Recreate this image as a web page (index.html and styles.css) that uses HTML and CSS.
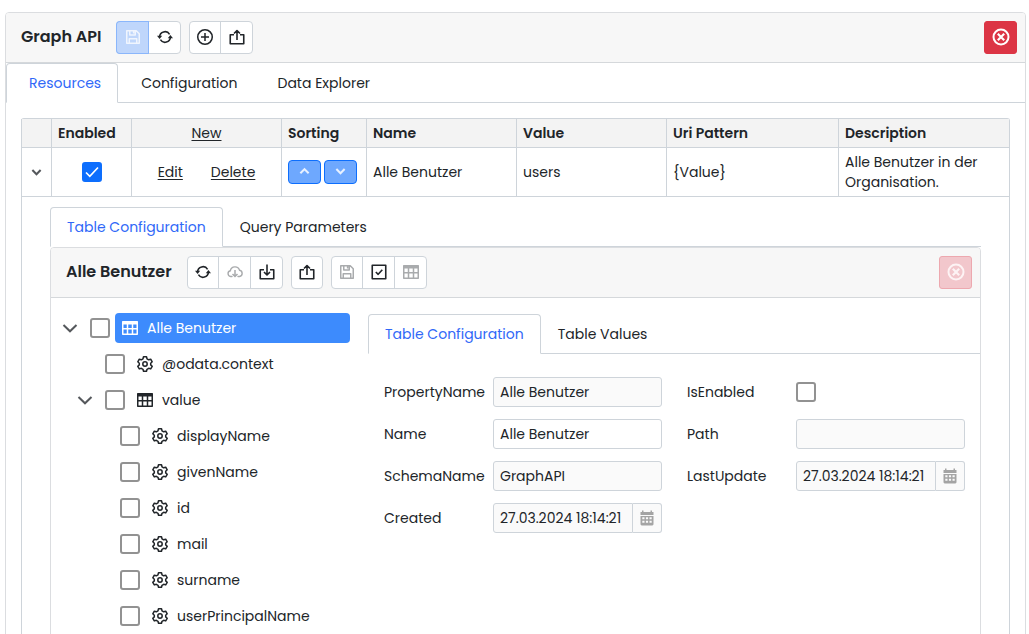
FILE: index.html
```
<!DOCTYPE html>
<html lang="de">
<head>
<meta charset="utf-8">
<meta name="viewport" content="width=device-width, initial-scale=1">
<title>Graph API</title>
<link rel="stylesheet" href="styles.css">
</head>
<body>
<svg class="sprite" aria-hidden="true">
  <symbol id="i-save" viewBox="0 0 16 16"><path fill="none" stroke="currentColor" stroke-width="1.5" stroke-linejoin="round" d="M1.75 1.75h9.5l3 3v9.5H1.75zM4.75 2v4h5.5V2M4.25 14v-4.25h7.5V14M8.6 2.5v2"/></symbol>
  <symbol id="i-refresh" viewBox="0 0 16 16"><path fill="none" stroke="currentColor" stroke-width="1.6" d="M2.6 8A5.4 5.4 0 0 1 12.6 5.3M13.4 8A5.4 5.4 0 0 1 3.4 10.7"/><path fill="currentColor" d="M0 6.8h5.2L2.6 9.9zM10.8 9.2H16l-2.6-3.1z"/></symbol>
  <symbol id="i-plus" viewBox="0 0 16 16"><path fill="none" stroke="currentColor" stroke-width="1.5" d="M8 .75a7.25 7.25 0 1 0 0 14.5A7.25 7.25 0 1 0 8 .75zM8 4v8M4 8h8"/></symbol>
  <symbol id="i-export" viewBox="0 0 16 16"><path fill="none" stroke="currentColor" stroke-width="1.6" stroke-linejoin="round" d="M5 5.75H1.25v9h13.5v-9H11M8 11V2M5 4.5l3-3 3 3"/></symbol>
  <symbol id="i-import" viewBox="0 0 16 16"><path fill="none" stroke="currentColor" stroke-width="1.6" stroke-linejoin="round" d="M5 5.75H1.25v9h13.5v-9H11M8 .5V11M5 8l3 3 3-3"/></symbol>
  <symbol id="i-close" viewBox="0 0 18 18"><circle cx="9" cy="9" r="7.5" fill="none" stroke="currentColor" stroke-width="2"/><path fill="none" stroke="currentColor" stroke-width="2.2" d="M5.8 5.8l6.4 6.4M12.2 5.8l-6.4 6.4"/></symbol>
  <symbol id="i-cloud" viewBox="0 0 16 16"><path fill="none" stroke="currentColor" stroke-width="1.4" stroke-linecap="round" d="M5 12.5H3.6A2.9 2.9 0 0 1 3.3 6.8A4.8 4.8 0 0 1 12.6 6.3A3.15 3.15 0 0 1 12.5 12.5H11"/><path fill="none" stroke="currentColor" stroke-width="1.5" d="M8 6v6.5M5.5 10L8 12.5 10.500 10"/></symbol>
  <symbol id="i-check" viewBox="0 0 16 16"><path fill="none" stroke="currentColor" stroke-width="1.6" stroke-linejoin="round" d="M1.25 1.25h13.5v13.5H1.25zM4.8 8l2.4 2.3 4.1-4.6"/></symbol>
  <symbol id="i-grid" viewBox="0 0 16 16"><path fill="none" stroke="currentColor" stroke-width="1.5" stroke-linejoin="round" d="M.75 1.75h14.5v12.5H.75zM1 8.75h14M5.5 3v11M10.5 3v11"/><path fill="currentColor" d="M.75 1.5h14.5v3H.75z"/></symbol>
  <symbol id="i-gear" viewBox="0 0 16 16"><path fill="none" stroke="currentColor" stroke-width="1.5" stroke-linejoin="round" d="M6.500.8h3l.5 2 1.7 1 2-.6 1.5 2.600L13.700 7.200v1.700l1.500 1.400-1.500 2.600-2-.6-1.700 1-.5 2h-3l-.5-2-1.700-1-2 .6-1.500-2.600L2.300 8.900V7.200L.800 5.800l1.500-2.600 2 .6 1.700-1z"/><circle cx="8" cy="8" r="2.200" fill="none" stroke="currentColor" stroke-width="1.5"/></symbol>
  <symbol id="i-down" viewBox="0 0 16 16"><path fill="none" stroke="currentColor" stroke-width="2" d="M1.5 5L8 11.3 14.5 5"/></symbol>
  <symbol id="i-down-bold" viewBox="0 0 16 16"><path fill="none" stroke="currentColor" stroke-width="3" d="M2 4.500L8 10.500l6-6"/></symbol>
  <symbol id="i-up-bold" viewBox="0 0 16 16"><path fill="none" stroke="currentColor" stroke-width="3" d="M2 10.500L8 4.500l6 6"/></symbol>
  <symbol id="i-calendar" viewBox="0 0 16 16"><path fill="currentColor" fill-rule="evenodd" d="M3 .5h1.500V2h7V.5H13V2h1.500v3h-13V2H3zM1.500 6h13v8.500l-1 1h-11l-1-1zM3.300 7.300v1.900h2.200V7.300zM6.900 7.300v1.900h2.200V7.300zM10.500 7.300v1.900h2.200V7.300zM3.300 10.700v2h2.200v-2zM6.900 10.700v2h2.200v-2zM10.500 10.700v2h2.200v-2z"/></symbol>
</svg>

<main class="card outer">
  <header class="card-head">
    <h1 class="title">Graph API</h1>
    <div class="group">
      <button class="tool primary" type="button" aria-label="Save" disabled><svg class="icon"><use href="#i-save"/></svg></button>
      <button class="tool" type="button" aria-label="Refresh"><svg class="icon"><use href="#i-refresh"/></svg></button>
    </div>
    <div class="group">
      <button class="tool" type="button" aria-label="Add"><svg class="icon"><use href="#i-plus"/></svg></button>
      <button class="tool" type="button" aria-label="Export"><svg class="icon"><use href="#i-export"/></svg></button>
    </div>
    <button class="close" type="button" aria-label="Close"><svg class="icon-close"><use href="#i-close"/></svg></button>
  </header>

  <nav class="tabs">
    <button class="tab roomy active" type="button">Resources</button>
    <button class="tab roomy" type="button">Configuration</button>
    <button class="tab roomy" type="button">Data Explorer</button>
  </nav>

  <div class="card-body">
    <table class="grid">
      <colgroup><col class="c-expand"><col class="c-enabled"><col class="c-command"><col class="c-sort"><col class="c-text"><col class="c-text"><col class="c-uri"><col></colgroup>
      <thead>
        <tr><th></th><th>Enabled</th><th class="center"><a class="link" href="#">New</a></th><th>Sorting</th><th>Name</th><th>Value</th><th>Uri Pattern</th><th>Description</th></tr>
      </thead>
      <tbody>
        <tr class="record">
          <td class="center"><button class="expander" type="button" aria-label="Collapse"><svg class="icon-small"><use href="#i-down-bold"/></svg></button></td>
          <td class="center"><input class="check" type="checkbox" aria-label="Enabled" checked></td>
          <td><div class="commands"><a class="link" href="#">Edit</a><a class="link" href="#">Delete</a></div></td>
          <td><div class="sorting"><button class="sort" type="button" aria-label="Move up"><svg class="icon-small"><use href="#i-up-bold"/></svg></button><button class="sort" type="button" aria-label="Move down"><svg class="icon-small"><use href="#i-down-bold"/></svg></button></div></td>
          <td>Alle Benutzer</td><td>users</td><td>{Value}</td><td>Alle Benutzer in der Organisation.</td>
        </tr>
        <tr>
          <td class="detail" colspan="8">
            <nav class="tabs">
              <button class="tab active" type="button">Table Configuration</button>
              <button class="tab" type="button">Query Parameters</button>
            </nav>
            <section class="card">
              <header class="card-head">
                <h2 class="title wide">Alle Benutzer</h2>
                <div class="group">
                  <button class="tool" type="button" aria-label="Refresh"><svg class="icon"><use href="#i-refresh"/></svg></button>
                  <button class="tool" type="button" aria-label="Download" disabled><svg class="icon"><use href="#i-cloud"/></svg></button>
                  <button class="tool" type="button" aria-label="Import"><svg class="icon"><use href="#i-import"/></svg></button>
                </div>
                <div class="group">
                  <button class="tool" type="button" aria-label="Export"><svg class="icon"><use href="#i-export"/></svg></button>
                </div>
                <div class="group">
                  <button class="tool" type="button" aria-label="Save" disabled><svg class="icon"><use href="#i-save"/></svg></button>
                  <button class="tool" type="button" aria-label="Validate"><svg class="icon"><use href="#i-check"/></svg></button>
                  <button class="tool" type="button" aria-label="Table" disabled><svg class="icon"><use href="#i-grid"/></svg></button>
                </div>
                <button class="close" type="button" aria-label="Close" disabled><svg class="icon-close"><use href="#i-close"/></svg></button>
              </header>
              <div class="split">
                <ul class="tree">
                  <li class="node"><button class="expander" type="button" aria-label="Collapse"><svg class="icon"><use href="#i-down"/></svg></button><input class="check" type="checkbox" id="n0"><label class="node-label selected" for="n0"><svg class="icon"><use href="#i-grid"/></svg>Alle Benutzer</label></li>
                  <li class="node level-1"><span class="expander"></span><input class="check" type="checkbox" id="n1"><label class="node-label" for="n1"><svg class="icon"><use href="#i-gear"/></svg>@odata.context</label></li>
                  <li class="node level-1"><button class="expander" type="button" aria-label="Collapse"><svg class="icon"><use href="#i-down"/></svg></button><input class="check" type="checkbox" id="n2"><label class="node-label" for="n2"><svg class="icon"><use href="#i-grid"/></svg>value</label></li>
                  <li class="node level-2"><span class="expander"></span><input class="check" type="checkbox" id="n3"><label class="node-label" for="n3"><svg class="icon"><use href="#i-gear"/></svg>displayName</label></li>
                  <li class="node level-2"><span class="expander"></span><input class="check" type="checkbox" id="n4"><label class="node-label" for="n4"><svg class="icon"><use href="#i-gear"/></svg>givenName</label></li>
                  <li class="node level-2"><span class="expander"></span><input class="check" type="checkbox" id="n5"><label class="node-label" for="n5"><svg class="icon"><use href="#i-gear"/></svg>id</label></li>
                  <li class="node level-2"><span class="expander"></span><input class="check" type="checkbox" id="n6"><label class="node-label" for="n6"><svg class="icon"><use href="#i-gear"/></svg>mail</label></li>
                  <li class="node level-2"><span class="expander"></span><input class="check" type="checkbox" id="n7"><label class="node-label" for="n7"><svg class="icon"><use href="#i-gear"/></svg>surname</label></li>
                  <li class="node level-2"><span class="expander"></span><input class="check" type="checkbox" id="n8"><label class="node-label" for="n8"><svg class="icon"><use href="#i-gear"/></svg>userPrincipalName</label></li>
                </ul>
                <div class="editor">
                  <nav class="tabs">
                    <button class="tab active" type="button">Table Configuration</button>
                    <button class="tab" type="button">Table Values</button>
                  </nav>
                  <form class="form">
                    <div class="fields">
                      <label for="property">PropertyName</label><input class="text" id="property" value="Alle Benutzer" readonly>
                      <label for="name">Name</label><input class="text" id="name" value="Alle Benutzer">
                      <label for="schema">SchemaName</label><input class="text" id="schema" value="GraphAPI" readonly>
                      <label for="created">Created</label><div class="date"><input class="text" id="created" value="27.03.2024 18:14:21" readonly><button class="pick" type="button" aria-label="Open calendar" disabled><svg class="icon"><use href="#i-calendar"/></svg></button></div>
                    </div>
                    <div class="fields">
                      <label for="enabled">IsEnabled</label><input class="check" type="checkbox" id="enabled">
                      <label for="path">Path</label><input class="text" id="path" readonly>
                      <label for="updated">LastUpdate</label><div class="date"><input class="text" id="updated" value="27.03.2024 18:14:21" readonly><button class="pick" type="button" aria-label="Open calendar" disabled><svg class="icon"><use href="#i-calendar"/></svg></button></div>
                    </div>
                  </form>
                </div>
              </div>
            </section>
          </td>
        </tr>
      </tbody>
    </table>
  </div>
</main>
</body>
</html>
```

FILE: styles.css
```
* { box-sizing: border-box; }

html { scrollbar-width: none; }

body {
  margin: 0;
  padding: 12px 3px 0 5px;
  background: #fff;
  color: #212529;
  font: 14px/20px Poppins, Inter, "Open Sans", sans-serif;
}

button, input { font: inherit; color: inherit; }
button { padding: 0; cursor: pointer; }
button:disabled { cursor: default; }

.sprite { position: absolute; width: 0; height: 0; }
.icon { display: block; flex: none; width: 16px; height: 16px; }
.icon-close { display: block; width: 18px; height: 18px; }
.icon-small { display: block; width: 11px; height: 11px; }

.card { border: 1px solid #dbdde0; border-radius: 4px 4px 0 0; }
.outer { min-height: 100vh; }

.card-head {
  display: flex;
  align-items: center;
  gap: 8px;
  height: 50px;
  padding: 0 8px 0 15px;
  background: #f7f7f7;
  border-bottom: 1px solid #d5d8db;
  border-radius: 3px 3px 0 0;
}

.title {
  min-width: 87px;
  margin: 0;
  padding-bottom: 2px;
  font-size: 16px;
  font-weight: 600;
  line-height: 24px;
  white-space: nowrap;
}
.title.wide { min-width: 113px; }

.group { display: flex; border: 1px solid #ced4da; border-radius: 4px; background: #fff; }
.tool {
  display: grid;
  place-items: center;
  width: 32px;
  height: 31px;
  padding-bottom: 2px;
  background: none;
  border: 0;
}
.tool:first-child { width: 30px; }
.tool + .tool { border-left: 1px solid #ced4da; }
.tool:disabled { color: #a9abad; }
.tool.primary {
  width: 31px;
  background: #bfd6fb;
  border-radius: 3px 0 0 3px;
  box-shadow: 0 0 0 1px #8ab6fb;
  color: #f0f5fe;
}
.primary + .tool { border-left-color: #8ab6fb; }

.close {
  display: grid;
  place-items: center;
  width: 33px;
  height: 33px;
  margin-left: auto;
  padding-bottom: 2px;
  background: #dc3545;
  border: 1px solid #dc3545;
  border-radius: 3px;
  color: #fff;
}
.close:disabled { background: #f2c7cc; border-color: #eda8af; color: #fdf3f4; }

.tabs { display: flex; height: 40px; border-bottom: 1px solid #ced4da; }
.tab {
  height: 40px;
  padding: 0 16px;
  background: none;
  border: 1px solid transparent;
  border-radius: 4px 4px 0 0;
  white-space: nowrap;
}
.tab.roomy { padding-left: 22px; }
.tab.active { background: #fff; border-color: #ced4da #ced4da #fff; color: #3068f8; }

.card-body { padding: 15px; }

.grid {
  width: 100%;
  table-layout: fixed;
  border-spacing: 0;
  border: solid #ced4da;
  border-width: 1px 1px 0 0;
  border-radius: 3px 3px 0 0;
}
.c-expand { width: 30px; }
.c-enabled { width: 80px; }
.c-command, .c-text { width: 150px; }
.c-sort { width: 85px; }
.c-uri { width: 172px; }

.grid th, .grid td { padding: 4px 6px; border-left: 1px solid #ced4da; text-align: left; }
.grid th { background: #f3f3f3; font-weight: 600; }
.grid td { border-top: 1px solid #ced4da; }
.grid .center { padding: 4px 0; text-align: center; }
.record { height: 49px; }
.link { color: inherit; font-weight: 400; text-underline-offset: 2px; }
.commands { display: flex; justify-content: center; gap: 28px; }
.center .check, .center .expander { margin: 0 auto; }
.center .expander { width: 20px; }

.sorting { display: flex; gap: 3px; }
.sort {
  display: grid;
  place-items: center;
  width: 33px;
  height: 24px;
  padding-bottom: 2px;
  background: #6ea8fe;
  border: 1px solid #0d6efd;
  border-radius: 4px;
  color: #e8f1ff;
}

.expander {
  display: grid;
  place-items: center;
  flex: none;
  width: 24px;
  height: 24px;
  background: none;
  border: 0;
  color: #55585c;
}

.check {
  appearance: none;
  display: block;
  flex: none;
  width: 20px;
  height: 20px;
  margin: 0;
  background: #fff;
  border: 2px solid #929292;
  border-radius: 3px;
}
.check:checked {
  border-color: #0d6efd;
  background: #0d6efd url("data:image/svg+xml,%3Csvg xmlns='http://www.w3.org/2000/svg' viewBox='0 0 16 16'%3E%3Cpath d='M2 8.500l3.800 3.800L14 3.500' fill='none' stroke='white' stroke-width='1.700'/%3E%3C/svg%3E") center / 16px no-repeat;
}

.grid .detail { padding: 10px 28px 0; }

.split { display: flex; gap: 18px; padding: 12px 0 24px 7px; }
.tree { flex: none; width: 292px; margin: 0; padding: 0; list-style: none; }
.node { display: flex; align-items: center; height: 36px; }
.node .check { margin: 0 5px 0 8px; }
.level-1 { padding-left: 15px; }
.level-2 { padding-left: 30px; }
.node-label {
  display: flex;
  align-items: center;
  flex: 1;
  gap: 9px;
  height: 30px;
  padding: 0 7px;
  border-radius: 4px;
}
.node-label.selected { background: #3d8bfd; color: #fff; }

.editor { flex: 1; min-width: 0; padding-top: 4px; }
.form { display: grid; grid-template-columns: 1fr 1fr; gap: 25px; padding: 23px 15px 0 16px; }
.fields {
  display: grid;
  grid-template-columns: 109px minmax(0, 1fr);
  grid-auto-rows: 30px;
  row-gap: 12px;
  align-items: center;
  align-content: start;
}
.text {
  width: 100%;
  min-width: 0;
  height: 30px;
  padding: 0 6px;
  background: #fff;
  border: 1px solid #ced4da;
  border-radius: 3px;
}
.text:read-only { background: #fafafa; }
.date { display: flex; }
.date .text { flex: 1; padding-right: 0; border-radius: 3px 0 0 3px; }
.pick {
  display: grid;
  place-items: center;
  flex: none;
  width: 29px;
  height: 30px;
  background: #fafafa;
  border: solid #ced4da;
  border-width: 1px 1px 1px 0;
  border-radius: 0 3px 3px 0;
  color: #a4a4a4;
}
```
